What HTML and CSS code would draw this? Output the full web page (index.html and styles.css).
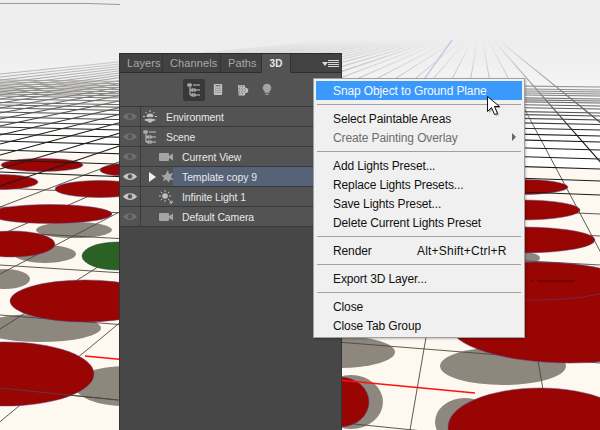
FILE: index.html
```html
<!DOCTYPE html>
<html lang="en">
<head>
<meta charset="utf-8">
<title>3D panel menu</title>
<link rel="stylesheet" href="styles.css">
</head>
<body>
<main class="stage">
  <svg class="scene" viewBox="0 0 600 430" width="600" height="430" aria-hidden="true">
    <defs>
      <linearGradient id="fade" x1="0" y1="0" x2="0" y2="1">
        <stop offset="0" stop-color="#ededed"/>
        <stop offset="0.3" stop-color="#ededed"/>
        <stop offset="0.5" stop-color="#ededed" stop-opacity="0.8"/>
        <stop offset="0.75" stop-color="#eeeeee" stop-opacity="0.4"/>
        <stop offset="1" stop-color="#ffffff" stop-opacity="0"/>
      </linearGradient>
    </defs>
    <rect width="600" height="430" fill="#ffffff"/>
    <polygon points="0,152 600,170 600,430 0,430" fill="#fdf9f0"/>
    <!-- grey shadows -->
    <g fill="#8d877e">
      <ellipse cx="74" cy="230" rx="38" ry="8"/>
      <ellipse cx="45" cy="254" rx="31" ry="9"/>
      <ellipse cx="5" cy="279" rx="25" ry="10"/>
      <ellipse cx="40" cy="328" rx="61" ry="14"/>
      <ellipse cx="125" cy="386" rx="50" ry="20"/>
      <ellipse cx="340" cy="352" rx="55" ry="16"/>
      <ellipse cx="503" cy="366" rx="63" ry="19"/>
      <ellipse cx="351" cy="402" rx="32" ry="27"/>
      <ellipse cx="465" cy="422" rx="30" ry="24"/>
      <ellipse cx="522" cy="258" rx="18" ry="6"/>
    </g>
    <!-- depth and cross lines near the camera -->
    <path class="grid-near" d="M480 25L0 329M480 25L0 274M480 25L0 235M480 25L0 207M480 25L-10 430M480 25L128 430M480 25L270 430M480 25L410 430M480 25L550 430M480 25L695 430M0 388L600 449M0 315L600 363M0 265L600 304M0 232L600 265M0 207L600 236M0 188L600 214"/>
    <!-- red and green spots -->
    <g fill="#980503" stroke="#5a4a90" stroke-width="0.5">
      <ellipse cx="42" cy="165" rx="41" ry="6.5"/>
      <ellipse cx="125" cy="170" rx="25" ry="6"/>
      <ellipse cx="0" cy="182" rx="38" ry="7.5"/>
      <ellipse cx="100" cy="189" rx="45" ry="8.5"/>
      <ellipse cx="50" cy="214" rx="62" ry="9.5"/>
      <ellipse cx="12" cy="244" rx="43" ry="13"/>
      <ellipse cx="85" cy="301" rx="75" ry="21"/>
      <ellipse cx="5" cy="374" rx="89" ry="32"/>
      <ellipse cx="340" cy="402" rx="29" ry="25"/>
      <ellipse cx="570" cy="325" rx="120" ry="38"/>
      <ellipse cx="540" cy="427" rx="92" ry="39"/>
      <ellipse cx="522" cy="187" rx="46" ry="7.5"/>
      <ellipse cx="522" cy="210" rx="58" ry="10"/>
      <ellipse cx="522" cy="240" rx="73" ry="13"/>
      <ellipse cx="535" cy="281" rx="88" ry="19"/>
    </g>
    <ellipse class="green" cx="118" cy="256" rx="36" ry="14"/>
    <path class="streak" d="M537 281h38M531 281h3"/>
    <path class="grid-near" d="M0 388L118 400"/>
    <!-- far grid towards the horizon -->
    <path class="grid" d="M480 25L0 186M480 25L0 169M480 25L0 155M480 25L0 144M480 25L0 135M480 25L0 126M480 25L0 119M480 25L0 113M480 25L0 108M480 25L0 103M480 25L0 99M480 25L0 95M480 25L0 92M480 25L0 89M480 25L0 86M480 25L0 83M480 25L0 80M480 25L0 77M480 25L0 74M480 25L836 430M480 25L980 430"/>
    <path class="grid" d="M0 172L600 195M0 160L600 181M0 150L600 169M0 141L600 159M0 134L600 150M0 127L600 142M0 122L600 136M0 117L600 130M0 112L600 124.500M0 108L600 120M0 105L600 116M0 102.500L600 113M0 99L600 109M0 96L600 106M0 94L600 103M0 92L600 101M0 90L600 99M0 88L600 96M0 86L600 94M0 84L600 92M0 82L600 90M0 80L600 87"/>
    <path class="axis" d="M85 356L475 393"/>
    <rect width="600" height="135" fill="url(#fade)"/>
    <path class="horizon" d="M0 3.500H88L120 4.500"/>
    <path class="axis-far" d="M452 40L420 85"/>
  </svg>

  <section class="panel">
    <nav class="tabs">
      <span class="tab">Layers</span>
      <span class="tab">Channels</span>
      <span class="tab">Paths</span>
      <span class="tab tab-active">3D</span>
      <svg class="panel-menu" width="18" height="10" viewBox="0 0 18 10" aria-hidden="true">
        <path class="tri" d="M0 3h6L3 7z"/>
        <path class="lines" d="M6 1.500h11M6 3.500h11M6 5.500h11M6 7.500h11"/>
      </svg>
    </nav>
    <div class="toolbar">
      <button class="tool tool-on" type="button" aria-label="Scene">
        <svg width="14" height="14" viewBox="0 0 14 14"><path class="ico-line" d="M1.500 2h3M6 2h7M3 4v8M3 7h3M8 7h5M3 12h3M8 12h5"/><rect class="ico-box" x="1" y="1" width="3" height="2"/><rect class="ico-box" x="5" y="6" width="3" height="2"/><rect class="ico-box" x="5" y="11" width="3" height="2"/></svg>
      </button>
      <button class="tool" type="button" aria-label="Meshes">
        <svg width="10" height="13" viewBox="0 0 12 14"><rect class="ico-fill" x="1" y="0.500" width="10" height="13" rx="1"/><path class="ico-cut" d="M3 2.500h6M3 5.500h1M5.500 5.500h1M8 5.500h1M3 8h1M5.500 8h1M8 8h1M3 10.500h1M5.500 10.500h1M8 10.500h1"/></svg>
      </button>
      <button class="tool" type="button" aria-label="Materials">
        <svg width="12" height="12" viewBox="0 0 14 14"><path class="ico-fill" d="M1 1.500h8l1 3 3 1v4l-3 1-1 3H2z"/><path class="ico-cut" d="M3 3h1M6 3h1M2 5h1M5 5h1M8 5h1M3 7h1M6 7h1M9 7h1M2 9h1M5 9h1M8 9h1M3 11h1M6 11h1"/></svg>
      </button>
      <button class="tool" type="button" aria-label="Lights">
        <svg width="10" height="13" viewBox="0 0 12 14"><path class="ico-dim" d="M6 0a5 5 0 0 1 3 9v2H3V9A5 5 0 0 1 6 0z"/><path class="ico-dim" d="M4 12h4v1.500H4z"/></svg>
      </button>
    </div>
    <ul class="rows">
      <li class="row">
        <span class="eye-cell"><svg class="eye" width="14" height="9" viewBox="0 0 14 9"><path d="M0 4.500C3 0 11 0 14 4.500 11 9 3 9 0 4.500z"/><circle class="pupil" cx="7" cy="4.500" r="2.200"/></svg></span>
        <span class="row-body">
          <svg class="node" width="14" height="14" viewBox="0 0 14 14"><path class="ico-line" d="M7 0v2M2.500 2l1.500 1.500M11.500 2L10 3.500M0 6.500h2M12 6.500h2"/><path class="ico-fill" d="M3.500 7a3.500 3.500 0 0 1 7 0z"/><path class="ico-fill" d="M1 10c3-2 9-2 12 0-2 1-3 1-3 1l-3 2-3-2s-1 0-3-1z"/></svg>
          <span class="label">Environment</span>
        </span>
      </li>
      <li class="row">
        <span class="eye-cell"><svg class="eye" width="14" height="9" viewBox="0 0 14 9"><path d="M0 4.500C3 0 11 0 14 4.500 11 9 3 9 0 4.500z"/><circle class="pupil" cx="7" cy="4.500" r="2.200"/></svg></span>
        <span class="row-body">
          <svg class="node" width="14" height="14" viewBox="0 0 14 14"><path class="ico-line" d="M1.500 2h3M6 2h7M3 4v8M3 7h3M8 7h5M3 12h3M8 12h5"/><rect class="ico-box" x="1" y="1" width="3" height="2"/><rect class="ico-box" x="5" y="6" width="3" height="2"/><rect class="ico-box" x="5" y="11" width="3" height="2"/></svg>
          <span class="label">Scene</span>
        </span>
      </li>
      <li class="row">
        <span class="eye-cell"><svg class="eye" width="14" height="9" viewBox="0 0 14 9"><path d="M0 4.500C3 0 11 0 14 4.500 11 9 3 9 0 4.500z"/><circle class="pupil" cx="7" cy="4.500" r="2.200"/></svg></span>
        <span class="row-body indent">
          <svg class="node" width="14" height="10" viewBox="0 0 14 10"><rect class="ico-dim" x="0" y="1" width="10" height="8" rx="1"/><path class="ico-dim" d="M10 4l4-2.500v7L10 6z"/></svg>
          <span class="label">Current View</span>
        </span>
      </li>
      <li class="row">
        <span class="eye-cell eye-on"><svg class="eye" width="14" height="9" viewBox="0 0 14 9"><path d="M0 4.500C3 0 11 0 14 4.500 11 9 3 9 0 4.500z"/><circle class="pupil" cx="7" cy="4.500" r="2.200"/></svg></span>
        <span class="row-body indent selected-row">
          <svg class="twisty" width="7" height="10" viewBox="0 0 7 10"><path d="M0 0l7 5-7 5z"/></svg>
          <svg class="node" width="14" height="13" viewBox="0 0 14 13"><path class="ico-dim" d="M8 0l1 4 4-1-2 4 3 3-4-.500-1 3-3-3-3 2 1-4-3-2 4-.500z"/></svg>
          <span class="label label-selected">Template copy 9</span>
        </span>
      </li>
      <li class="row">
        <span class="eye-cell eye-on"><svg class="eye" width="14" height="9" viewBox="0 0 14 9"><path d="M0 4.500C3 0 11 0 14 4.500 11 9 3 9 0 4.500z"/><circle class="pupil" cx="7" cy="4.500" r="2.200"/></svg></span>
        <span class="row-body indent">
          <svg class="node" width="14" height="14" viewBox="0 0 14 14"><circle class="ico-fill" cx="6" cy="6" r="2.800"/><path class="ico-line" d="M6 0v1.800M6 10.200V12M0 6h1.800M10.200 6H12M1.800 1.800l1.300 1.300M8.900 8.900l1.300 1.300M10.200 1.800L8.900 3.100M3.100 8.900l-1.300 1.300M10.500 10.500L13 13M13 10.500V13H10.500"/></svg>
          <span class="label">Infinite Light 1</span>
        </span>
      </li>
      <li class="row">
        <span class="eye-cell"><svg class="eye" width="14" height="9" viewBox="0 0 14 9"><path d="M0 4.500C3 0 11 0 14 4.500 11 9 3 9 0 4.500z"/><circle class="pupil" cx="7" cy="4.500" r="2.200"/></svg></span>
        <span class="row-body indent">
          <svg class="node" width="14" height="10" viewBox="0 0 14 10"><rect class="ico-dim" x="0" y="1" width="10" height="8" rx="1"/><path class="ico-dim" d="M10 4l4-2.500v7L10 6z"/></svg>
          <span class="label">Default Camera</span>
        </span>
      </li>
    </ul>
  </section>

  <section class="menu">
    <div class="item item-hot">Snap Object to Ground Plane</div>
    <div class="sep"></div>
    <div class="item">Select Paintable Areas</div>
    <div class="item item-off">Create Painting Overlay<span class="submenu"></span></div>
    <div class="sep"></div>
    <div class="item">Add Lights Preset...</div>
    <div class="item">Replace Lights Presets...</div>
    <div class="item">Save Lights Preset...</div>
    <div class="item">Delete Current Lights Preset</div>
    <div class="sep"></div>
    <div class="item">Render<span class="shortcut">Alt+Shift+Ctrl+R</span></div>
    <div class="sep"></div>
    <div class="item">Export 3D Layer...</div>
    <div class="sep"></div>
    <div class="item">Close</div>
    <div class="item">Close Tab Group</div>
  </section>

  <svg class="cursor" width="16" height="22" viewBox="0 0 16 22" aria-hidden="true">
    <path class="cursor-shadow" d="M2 2v15l4-4 3 7 3-1-3-7h5z"/>
    <path class="cursor-arrow" d="M0.500 0.500v15l4-4 3 7 3-1-3-7h5z"/>
  </svg>
</main>
</body>
</html>
```
FILE: styles.css
```css
* { box-sizing: border-box; }
html, body { margin: 0; padding: 0; }
body { width: 600px; height: 430px; overflow: hidden; font-family: "Liberation Sans", Arial, sans-serif; }

.stage { position: relative; width: 600px; height: 430px; overflow: hidden; background: #fff; }
.scene { position: absolute; left: 0; top: 0; display: block; }
.green { fill: #2b6122; stroke: #274a50; stroke-width: .5; }
.streak { stroke: #4a0200; stroke-width: 1; fill: none; }
.grid { stroke: #1f1c18; stroke-width: 1.15; fill: none; }
.grid-near { stroke: #4c4842; stroke-width: .9; fill: none; }
.axis { stroke: #ff1010; stroke-width: 1.6; fill: none; }
.axis-far { stroke: #c9c8ef; stroke-width: 1.5; fill: none; }
.horizon { stroke: #999; stroke-width: 1; fill: none; }

/* 3D panel */
.panel {
  position: absolute; left: 119px; top: 53px; width: 223px; height: 377px;
  background: #474747; border-top: 1px solid #2c2c2c; border-right: 1px solid #333;
  border-left: 1px solid #333;
  display: flex; flex-direction: column;
  color: #e4e4e4; font-size: 10.4px;
}
.tabs {
  height: 19px; display: flex; align-items: stretch; background: #424242;
  border-bottom: 1px solid #2f2f2f; position: relative; flex: none;
}
.tab {
  display: flex; align-items: center; padding: 0 7px; color: #a8a8a8;
  border-right: 1px solid #333; font-size: 11px; letter-spacing: .1px;
}
.tab:nth-child(1) { width: 43px; }
.tab:nth-child(2) { width: 58px; }
.tab:nth-child(3) { width: 41px; }
.tab-active { width: 29px; background: #535353; color: #e8e8e8; font-weight: 700; font-size: 10px; margin-bottom: -1px; justify-content: center; padding: 0; }
.panel-menu { position: absolute; right: 1px; top: 5px; }
.tri { fill: #ddd; }
.lines { stroke: #d8d8d8; stroke-width: 1; fill: none; }

.toolbar {
  height: 34px; flex: none; background: #535353; display: flex; align-items: center;
  padding-left: 63px; gap: 2px; border-bottom: 1px solid #383838;
}
.tool {
  width: 22px; height: 22px; padding: 0; border: 0; background: transparent;
  display: flex; align-items: center; justify-content: center;
}
.tool-on { background: #383838; border-radius: 2px; }
.tool:nth-child(3) { margin-left: 1px; }
.ico-line { stroke: #c6c6c6; stroke-width: 1; fill: none; }
.ico-box { fill: none; stroke: #c6c6c6; stroke-width: 1; }
.ico-fill { fill: #c0c0c0; }
.ico-dim { fill: #a4a4a4; }
.ico-cut { stroke: #4c4c4c; stroke-width: 1; fill: none; }

.rows { list-style: none; margin: 0; padding: 0; flex: none; }
.row { height: 20px; display: flex; background: #535353; border-bottom: 1px solid #3a3a3a; }
.eye-cell {
  width: 21px; flex: none; display: flex; align-items: center; justify-content: center;
  border-right: 1px solid #3a3a3a;
}
.eye path { fill: #6f6f6f; }
.eye .pupil { fill: #535353; }
.eye-on .eye path { fill: #c4c4c4; }
.row-body { flex: 1; display: flex; align-items: center; padding-left: 2px; min-width: 0; }
.indent { padding-left: 18px; }
.node { flex: none; margin-right: 9px; }
.indent .node { margin-right: 9px; }
.label { white-space: nowrap; color: #e8e8e8; letter-spacing: -.05px; margin-top: 2px; }
.selected-row { position: relative; padding-left: 8px; }
.selected-row::before { content: ""; position: absolute; left: 32px; top: 0; right: 0; bottom: 0; background: #566277; }
.twisty { flex: none; margin-right: 4px; position: relative; }
.twisty path { fill: #f0f0f0; }
.selected-row .node { position: relative; margin-right: 8px; }
.label-selected { position: relative; }

/* context menu */
.menu {
  position: absolute; left: 313px; top: 78px; width: 212px; height: 260px;
  background: #f0f0f0; border: 1px solid #a0a0a0; padding: 2px;
  font-size: 12px; color: #111;
  box-shadow: 1px 1px 2px rgba(0,0,0,.25);
}
.item {
  height: 19px; line-height: 21px; padding-left: 17px; position: relative; white-space: nowrap;
  letter-spacing: -.12px;
}
.item-hot { background: #3b99fc; color: #f4f8ff; }
.item-off { color: #6d6d6d; }
.sep { height: 9px; padding-top: 4px; margin: 0 1px; }
.sep::before { content: ""; display: block; height: 1px; background: #a0a0a0; }
.shortcut { position: absolute; left: 101px; top: 0; letter-spacing: .2px; }
.submenu {
  position: absolute; right: 6px; top: 5px; width: 0; height: 0;
  border-left: 4px solid #666; border-top: 4px solid transparent; border-bottom: 4px solid transparent;
}

.cursor { position: absolute; left: 487px; top: 96px; }
.cursor-shadow { fill: rgba(0,0,0,.3); }
.cursor-arrow { fill: #fff; stroke: #111; stroke-width: 1; }
```
